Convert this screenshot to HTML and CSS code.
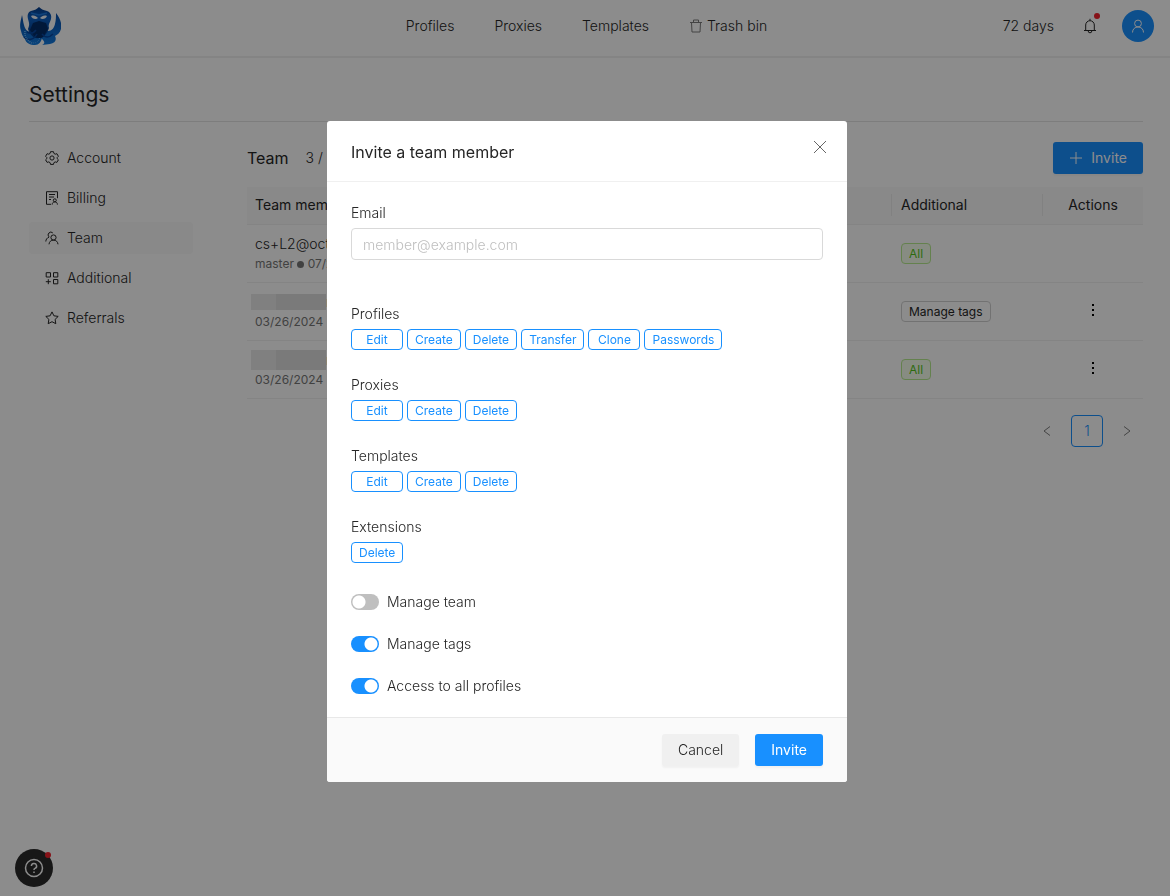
FILE: index.html
```html
<!DOCTYPE html>
<html lang="en">
<head>
<meta charset="utf-8">
<meta name="viewport" content="width=device-width, initial-scale=1">
<title>Settings – Team</title>
<link rel="stylesheet" href="styles.css">
</head>
<body>
<header class="topbar">
  <a class="logo" href="#" aria-label="Home">
    <svg viewBox="0 0 42 40" width="42" height="40">
      <defs>
        <linearGradient id="arm" x1="0" y1="0" x2="0" y2="1"><stop offset="0" stop-color="#0a4fa8"/><stop offset="1" stop-color="#127be0"/></linearGradient>
        <linearGradient id="body" x1="0" y1="0" x2="0" y2="1"><stop offset="0" stop-color="#053a86"/><stop offset=".35" stop-color="#0c60c4"/><stop offset="1" stop-color="#04367f"/></linearGradient>
      </defs>
      <path d="M3 9C2 14 0 19 2 25c1 4 2 6 4 8 1 4 5 6 10 6 4 0 6-3 7-7l-3-8-8 2c-4 0-6-3-7-7-1-3-1-6-2-10z" fill="url(#arm)"/>
      <path d="M37 7c4 5 6 10 5 16-1 4-4 6-6 7 2 4 0 7-5 8l-8 1c3-2 3-3 0-6l-3-9 9 1c4 0 6-3 7-7 1-4 1-8 1-11z" fill="url(#arm)"/>
      <path d="M20 1c2 2 4 3 8 4 3 1 5 4 4 8-1 4-3 5-2 9-2 6-6 11-10 10-5 1-9-3-11-9 2-5 1-6 0-10-1-4 0-7 3-8 4-1 6-2 8-4z" fill="url(#body)"/>
      <path d="M14 17l6-2 7 2 2 6-5 8-4 1-4-1-5-7z" fill="#032c69"/>
      <path d="M12 7l8 2 8-2" fill="none" stroke="#1c78dc" stroke-width="1.500"/>
      <path d="M12 10c3-1 5 0 7 2-2 2-6 1-7-2zM28 10c-3-1-5 0-7 2 2 2 6 1 7-2z" fill="#f2f8ff"/>
      <path d="M8 26c4 2 7 1 9-2M5 31c4 4 10 3 13-3M34 28c-4 4-8 4-11 0" fill="none" stroke="#0646a0" stroke-width="1.500"/>
      <path d="M6 25q-1 8 7 12" fill="none" stroke="#6bb2f2" stroke-width="1.500" stroke-dasharray="1 1"/>
      <path d="M14 37c4 0 6-2 7-6" fill="none" stroke="#4b9eea" stroke-dasharray="1 1"/>
    </svg>
  </a>
  <nav class="mainnav">
    <a href="#">Profiles</a>
    <a href="#">Proxies</a>
    <a href="#">Templates</a>
    <a href="#" class="trash"><svg class="soft" viewBox="0 0 14 14" width="14" height="14"><path d="M1 3.500h12M4.500 3V1h5v2M2.500 3.500l.5 9.500h8l.5-9.500"/></svg>Trash bin</a>
  </nav>
  <div class="account">
    <span>72 days</span>
    <button class="bell" aria-label="Notifications">
      <svg viewBox="0 0 14 16" width="14" height="16"><path d="M1 12.500h12M2.700 12.500V7a4.300 4.300 0 0 1 8.600 0v5.500M7 2.500V.8M5.200 13a1.800 1.800 0 0 0 3.600 0"/></svg>
      <span class="dot"></span>
    </button>
    <button class="avatar" aria-label="Account menu"><svg viewBox="0 0 14 14" width="14" height="14"><circle cx="7" cy="4.500" r="3.400"/><path d="M1.500 13.500c0-3.500 2.500-5.500 5.500-5.500s5.500 2 5.500 5.500"/></svg></button>
  </div>
</header>

<main class="page">
  <h1>Settings</h1>
  <div class="columns">
    <nav class="side">
      <a href="#"><svg viewBox="0 0 14 14" width="14" height="14"><path d="M5.500.7h3l.4 1.700 1.300.8 1.700-.5 1.500 2.600L12.200 6.500v1.200l1.200 1.100-1.500 2.600-1.700-.5-1.300.8-.4 1.700h-3l-.4-1.700-1.300-.8-1.700.5L.6 8.800l1.200-1.100V6.500L.6 5.300l1.500-2.600 1.700.5 1.300-.8z"/><circle cx="7" cy="7" r="2.100"/></svg>Account</a>
      <a href="#"><svg viewBox="0 0 14 14" width="14" height="14"><path d="M6 13.300H1.500V.7h11v6.500M4 3.500h6M4 6h5M4 8.500h2"/><circle cx="9.800" cy="9.300" r="1.500"/><path d="M7.200 13.600c0-1.700 1-2.700 2.600-2.700s2.600 1 2.600 2.700"/></svg>Billing</a>
      <a href="#" class="current" aria-current="page"><svg viewBox="0 0 14 14" width="14" height="14"><circle cx="8.500" cy="6.500" r="2.600"/><path d="M4 13.300c.2-2.600 2-4.200 4.500-4.200s4.300 1.600 4.500 4.200M7.800 1.900A2.600 2.600 0 1 0 4 5.900M.8 10.500c.1-2 1.200-3.700 3.200-4.300"/></svg>Team</a>
      <a href="#"><svg viewBox="0 0 14 14" width="14" height="14"><path d="M1.200 1.700h4.300V6H1.200zM8.500 1.700h4.300V6H8.500zM8.500 8.500h4.300v4.300H8.500zM3.300 8.200v5M.8 10.700h5"/></svg>Additional</a>
      <a href="#"><svg viewBox="0 0 14 14" width="14" height="14"><path d="M7 .9l1.900 3.900 4.300.6-3.100 3 .7 4.300L7 10.700l-3.800 2 .7-4.300-3.100-3 4.300-.6z"/></svg>Referrals</a>
    </nav>
    <section class="content">
      <div class="bar">
        <h2>Team</h2>
        <span class="count">3 / 10</span>
        <button class="btn primary add"><svg viewBox="0 0 14 14" width="14" height="14"><path d="M7 1v12M1 7h12"/></svg>Invite</button>
      </div>
      <table class="members">
        <thead>
          <tr><th>Team member</th><th class="extra"><span>Additional</span></th><th class="actions"><span>Actions</span></th></tr>
        </thead>
        <tbody>
          <tr>
            <td><div class="mail">cs+L2@octo</div><div class="meta">master <i class="bullet"></i> 07/26/2024</div></td>
            <td><span class="tag green">All</span></td>
            <td></td>
          </tr>
          <tr>
            <td><div class="mail"><span class="redacted"></span>r</div><div class="meta">03/26/2024</div></td>
            <td><span class="tag">Manage tags</span></td>
            <td class="center"><button class="more" aria-label="More actions"><svg viewBox="0 0 4 14" width="4" height="14"><path d="M1 1h2v2H1zM1 6h2v2H1zM1 11h2v2H1z"/></svg></button></td>
          </tr>
          <tr>
            <td><div class="mail"><span class="redacted tall"></span>m</div><div class="meta">03/26/2024</div></td>
            <td><span class="tag green">All</span></td>
            <td class="center"><button class="more" aria-label="More actions"><svg viewBox="0 0 4 14" width="4" height="14"><path d="M1 1h2v2H1zM1 6h2v2H1zM1 11h2v2H1z"/></svg></button></td>
          </tr>
        </tbody>
      </table>
      <nav class="pager" aria-label="Pages">
        <button aria-label="Previous" disabled><svg class="soft" viewBox="0 0 8 12" width="8" height="12"><path d="M7 1.500L1 6l6 4.500"/></svg></button>
        <button class="active">1</button>
        <button aria-label="Next" disabled><svg class="soft" viewBox="0 0 8 12" width="8" height="12"><path d="M1 1.500L7 6l-6 4.500"/></svg></button>
      </nav>
    </section>
  </div>
</main>

<button class="help" aria-label="Help">
  <svg viewBox="0 0 20 20" width="20" height="20"><circle cx="10" cy="10" r="8.500"/><path d="M7.400 8a2.600 2.600 0 1 1 3.600 2.400c-.7.300-1 .7-1 1.500"/><path d="M10 13.500v1.600"/></svg>
  <span class="dot"></span>
</button>

<div class="mask">
  <form class="modal" role="dialog" aria-labelledby="dialog-title">
    <div class="modal-head">
      <h2 id="dialog-title">Invite a team member</h2>
      <button type="button" class="close" aria-label="Close"><svg viewBox="0 0 14 14" width="14" height="14"><path d="M1 1l12 12M13 1L1 13"/></svg></button>
    </div>
    <div class="modal-body">
      <div class="field">
        <label for="email">Email</label>
        <input id="email" type="email" placeholder="member@example.com">
      </div>
      <div class="group"><span>Profiles</span>
        <div class="chips"><button type="button">Edit</button><button type="button">Create</button><button type="button">Delete</button><button type="button">Transfer</button><button type="button">Clone</button><button type="button">Passwords</button></div>
      </div>
      <div class="group"><span>Proxies</span>
        <div class="chips"><button type="button">Edit</button><button type="button">Create</button><button type="button">Delete</button></div>
      </div>
      <div class="group"><span>Templates</span>
        <div class="chips"><button type="button">Edit</button><button type="button">Create</button><button type="button">Delete</button></div>
      </div>
      <div class="group"><span>Extensions</span>
        <div class="chips"><button type="button">Delete</button></div>
      </div>
      <div class="switches">
        <label><input type="checkbox" role="switch">Manage team</label>
        <label><input type="checkbox" role="switch" checked>Manage tags</label>
        <label><input type="checkbox" role="switch" checked>Access to all profiles</label>
      </div>
    </div>
    <div class="modal-foot">
      <button type="button" class="btn plain">Cancel</button>
      <button type="submit" class="btn primary">Invite</button>
    </div>
  </form>
</div>
</body>
</html>
```

FILE: styles.css
```css
* { box-sizing: border-box; }

body {
  margin: 0;
  min-height: 100vh;
  background: #fff;
  color: #262626;
  font: 300 14px/22px Inter, "Liberation Sans", sans-serif;
}

h1, h2 { margin: 0; font-weight: 400; }
a { color: inherit; text-decoration: none; }
button, input { font: inherit; color: inherit; }
button { margin: 0; padding: 0; border: 0; background: none; }

svg { flex: none; display: block; }
svg path, svg circle { stroke-linejoin: round; }
.mainnav svg, .account svg, .side svg, .btn svg, .pager svg, .help svg, .close svg {
  fill: none;
  stroke: currentColor;
}
.soft { opacity: 0.6; }

/* Top bar */
.topbar {
  display: grid;
  grid-template-columns: 1fr auto 1fr;
  align-items: center;
  height: 58px;
  padding: 0 16px 4px 19px;
  border-bottom: 2px solid #f0f0f0;
}
.mainnav { display: flex; gap: 40px; }
.trash { display: flex; align-items: center; gap: 4px; }
.account { display: flex; justify-content: flex-end; align-items: center; }
.bell { position: relative; margin: 0 25px 0 29px; }
.dot {
  position: absolute;
  width: 6px;
  height: 6px;
  border-radius: 50%;
  background: #f5222d;
}
.bell .dot { top: -5px; right: -3px; }
.avatar {
  display: grid;
  place-items: center;
  width: 32px;
  height: 32px;
  border-radius: 50%;
  background: #1890ff;
  color: #fff;
}

/* Settings page */
.page { padding: 22px 27px 0 29px; }
h1 {
  padding-bottom: 11px;
  border-bottom: 1px solid #e4e4e4;
  font-size: 21px;
  line-height: 30px;
}
.columns { display: flex; gap: 54px; padding-top: 20px; }
.side { display: flex; flex-direction: column; gap: 8px; width: 164px; }
.side a {
  display: flex;
  align-items: center;
  gap: 8px;
  padding: 5px 16px;
  border-radius: 4px;
}
.side .current { background: #f9f9f9; }

.content { flex: 1; min-width: 0; }
.bar { display: flex; align-items: center; margin-bottom: 13px; }
.bar h2 { font-size: 16px; }
.count { margin-left: 17px; }
.bar .add { margin-left: auto; }

.btn {
  display: flex;
  align-items: center;
  gap: 8px;
  height: 32px;
  padding: 0 16px;
  border-radius: 3px;
  box-shadow: 0 2px 2px rgba(0, 0, 0, 0.04);
}
.primary { background: #1890ff; color: #fff; font-weight: 400; }
.plain { background: #f0f0f0; }

.members { width: 100%; border-collapse: collapse; table-layout: fixed; }
.members th {
  height: 37px;
  padding: 0;
  background: #fafafa;
  border-bottom: 1px solid #f0f0f0;
  font-weight: 400;
  text-align: left;
}
.members th:first-child { padding-left: 8px; }
.members th span { display: block; padding-left: 9px; border-left: 1px solid #ececec; }
.members .extra { width: 151px; }
.members .actions { width: 101px; }
.members .actions span { padding: 0; text-align: center; }
.members td {
  height: 58px;
  padding: 0 8px;
  border-bottom: 1px solid #f0f0f0;
}
.members td:nth-child(2) { padding-left: 10px; }
.mail { display: flex; align-items: center; height: 22px; }
.meta { color: #777; font-size: 12px; font-weight: 400; line-height: 18px; }
.bullet {
  display: inline-block;
  width: 7px;
  height: 7px;
  border-radius: 50%;
  background: #777;
}
.redacted {
  width: 75px;
  height: 16px;
  margin-left: -4px;
  background: linear-gradient(90deg, #e9e9e9 33%, #dedede 33%);
}
.tall { height: 20px; }
.tag {
  display: inline-block;
  padding: 0 7px;
  border: 1px solid #d0d0d0;
  border-radius: 4px;
  font-size: 12px;
  font-weight: 400;
  line-height: 19px;
}
.green { border-color: #b7eb8f; background: #f6ffed; color: #52c41a; }
.more { display: inline-grid; place-items: center; width: 22px; height: 22px; }
.center { text-align: center; }

.pager { display: flex; justify-content: flex-end; gap: 8px; padding-top: 16px; }
.pager button { display: grid; place-items: center; width: 32px; height: 32px; }
.pager .active { border: 1px solid #1890ff; border-radius: 4px; color: #1890ff; }

.help {
  position: fixed;
  left: 15px;
  bottom: 9px;
  display: grid;
  place-items: center;
  width: 38px;
  height: 38px;
  border-radius: 50%;
  background: #2a2a2a;
  color: #fff;
}
.help svg { stroke-width: 1.5; }
.help .dot { top: 3px; right: 2px; }

/* Invite dialog */
.mask {
  position: fixed;
  inset: 0;
  overflow: auto;
  padding: 121px 16px 24px 20px;
  background: rgba(0, 0, 0, 0.45);
}
.modal {
  max-width: 520px;
  margin: 0 auto;
  border-radius: 3px;
  overflow: hidden;
  background: #fff;
}
.modal-head {
  display: flex;
  justify-content: space-between;
  padding: 16px 20px 14px 24px;
  border-bottom: 1px solid #f0f0f0;
}
.modal-head h2 { font-size: 16px; line-height: 30px; }
.close { display: grid; place-items: center; width: 14px; height: 20px; }
.close svg { opacity: 0.7; }
.modal-body { padding: 20px 24px; }
.field { display: flex; flex-direction: column; gap: 4px; margin-bottom: 43px; }
.field input {
  width: 100%;
  height: 32px;
  padding: 0 11px;
  border: 1px solid #d9d9d9;
  border-radius: 4px;
  background: #fff;
}
.field input::placeholder { color: #bfbfbf; opacity: 1; }
.group { margin-bottom: 24px; }
.group span { display: block; }
.chips { display: flex; flex-wrap: wrap; gap: 4px; padding-top: 4px; }
.chips button {
  min-width: 52px;
  padding: 0 7px;
  border: 1px solid #1890ff;
  border-radius: 4px;
  color: #1890ff;
  font-size: 12px;
  font-weight: 400;
  line-height: 19px;
}
.switches { display: flex; flex-direction: column; gap: 20px; padding-top: 4px; }
.switches label { display: flex; align-items: center; gap: 8px; }
.switches input {
  appearance: none;
  width: 28px;
  height: 16px;
  margin: 0;
  border-radius: 8px;
  background: radial-gradient(circle at 8px 8px, #fff 6px, transparent 7px) #bfbfbf;
}
.switches input:checked {
  background: radial-gradient(circle at 20px 8px, #fff 6px, transparent 7px) #1890ff;
}
.modal-foot {
  display: flex;
  justify-content: flex-end;
  gap: 16px;
  padding: 16px 24px;
  border-top: 1px solid #e8e8e8;
  background: #fafafa;
}
```
